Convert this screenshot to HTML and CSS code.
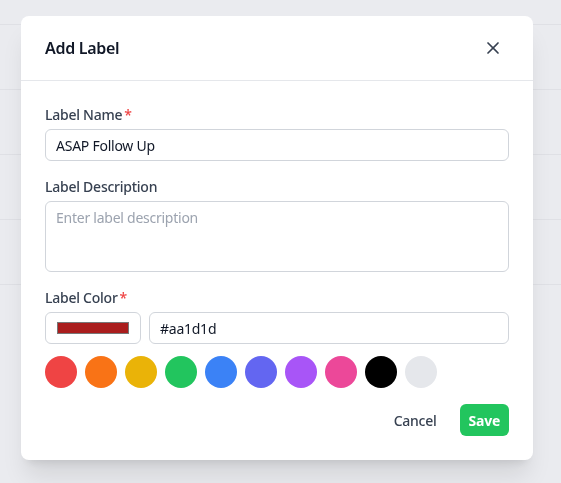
FILE: index.html
```html
<!DOCTYPE html>
<html lang="en">
<head>
<meta charset="utf-8">
<title>Add Label</title>
<link rel="stylesheet" href="styles.css">
</head>
<body>
<div class="backdrop">
  <div class="row row-head"></div>
  <div class="row"></div>
  <div class="row"></div>
  <div class="row"></div>
  <div class="row"></div>
</div>
<div class="overlay">
  <div class="modal">
    <div class="modal-header">
      <h2 class="modal-title">Add Label</h2>
      <button class="close-btn" type="button" aria-label="Close">
        <svg width="20" height="20" viewBox="0 0 24 24" fill="none" stroke="currentColor" stroke-width="2" stroke-linecap="round" stroke-linejoin="round"><path d="M18 6 6 18"/><path d="m6 6 12 12"/></svg>
      </button>
    </div>
    <div class="modal-body">
      <div class="field">
        <label class="field-label">Label Name<span class="req">*</span></label>
        <input class="text-input" type="text" value="ASAP Follow Up">
      </div>
      <div class="field">
        <label class="field-label">Label Description</label>
        <textarea class="text-area" placeholder="Enter label description"></textarea>
      </div>
      <div class="field">
        <label class="field-label">Label Color<span class="req">*</span></label>
        <div class="color-row">
          <input class="color-input" type="color" value="#aa1d1d">
          <input class="text-input hex-input" type="text" value="#aa1d1d">
        </div>
      </div>
      <div class="swatches">
        <span class="swatch sw-red"></span>
        <span class="swatch sw-orange"></span>
        <span class="swatch sw-yellow"></span>
        <span class="swatch sw-green"></span>
        <span class="swatch sw-blue"></span>
        <span class="swatch sw-indigo"></span>
        <span class="swatch sw-purple"></span>
        <span class="swatch sw-pink"></span>
        <span class="swatch sw-black"></span>
        <span class="swatch sw-gray"></span>
      </div>
      <div class="actions">
        <button class="btn-cancel" type="button">Cancel</button>
        <button class="btn-save" type="button">Save</button>
      </div>
    </div>
  </div>
</div>
</body>
</html>
```
FILE: styles.css
```css
* { box-sizing: border-box; }
html, body { margin: 0; padding: 0; }
body {
  width: 561px;
  height: 483px;
  overflow: hidden;
  background: #eaebef;
  font-family: "Noto Sans", "Open Sans", sans-serif;
  letter-spacing: -0.25px;
  color: #111827;
}
.backdrop { width: 100%; }
.row { height: 65px; border-bottom: 1px solid #dfe0e5; }
.row-head { height: 25px; }

.overlay {
  position: fixed;
  inset: 0;
  padding: 16px 0 0 21px;
}
.modal {
  width: 512px;
  background: #ffffff;
  border-radius: 8px;
  box-shadow: 0 20px 25px -5px rgba(0,0,0,0.10), 0 8px 10px -6px rgba(0,0,0,0.10);
}
.modal-header {
  height: 65px;
  display: flex;
  align-items: center;
  justify-content: space-between;
  padding: 0 24px;
  border-bottom: 1px solid #e5e7eb;
}
.modal-title {
  margin: 0;
  font-size: 16px;
  font-weight: 600;
  line-height: 24px;
  letter-spacing: -0.3px;
  color: #111827;
}
.close-btn {
  display: flex;
  padding: 6px;
  border: 0;
  background: transparent;
  color: #374151;
  cursor: pointer;
}
.modal-body {
  padding: 24px;
  display: flex;
  flex-direction: column;
}
.field { display: flex; flex-direction: column; gap: 4px; margin-bottom: 16px; }
.field:nth-child(3) { margin-bottom: 12px; }
.field-label {
  font-size: 14px;
  line-height: 20px;
  font-weight: 500;
  color: #374151;
}
.req { color: #ef4444; margin-left: 2px; }
.text-input, .text-area {
  width: 100%;
  height: 32px;
  border: 1px solid #d1d5db;
  border-radius: 6px;
  padding: 0 10px;
  font-family: inherit;
  font-size: 14px;
  letter-spacing: -0.25px;
  color: #111827;
  background: #fff;
  outline: none;
}
.text-area {
  height: 71px;
  padding: 6px 10px;
  line-height: 20px;
  resize: none;
  display: block;
}
.text-area::placeholder { color: #9ca3af; }
.color-row { display: flex; gap: 8px; }
.color-input {
  flex: 0 0 96px;
  width: 96px;
  height: 32px;
  padding: 0;
  border: 1px solid #d1d5db;
  border-radius: 6px;
  background: #fff;
  cursor: pointer;
}
.color-input::-webkit-color-swatch-wrapper { padding: 9px 11px; }
.color-input::-webkit-color-swatch { border: 1px solid #777777; border-radius: 0; }
.hex-input { flex: 1; }
.swatches { display: flex; gap: 8px; }
.swatch { width: 32px; height: 32px; border-radius: 50%; display: block; }
.sw-red { background: #ef4444; }
.sw-orange { background: #f97316; }
.sw-yellow { background: #eab308; }
.sw-green { background: #22c55e; }
.sw-blue { background: #3b82f6; }
.sw-indigo { background: #6366f1; }
.sw-purple { background: #a855f7; }
.sw-pink { background: #ec4899; }
.sw-black { background: #000000; }
.sw-gray { background: #e5e7eb; }
.actions {
  display: flex;
  justify-content: flex-end;
  align-items: center;
  gap: 11px;
  margin-top: 16px;
}
.btn-cancel, .btn-save {
  height: 32px;
  border: 0;
  border-radius: 6px;
  font-family: inherit;
  font-size: 14px;
  letter-spacing: -0.25px;
  cursor: pointer;
}
.btn-cancel {
  background: transparent;
  color: #374151;
  font-weight: 500;
  padding: 0 12px;
}
.btn-save {
  background: #22c55e;
  color: #ffffff;
  font-weight: 700;
  padding: 0 9px;
}
```
